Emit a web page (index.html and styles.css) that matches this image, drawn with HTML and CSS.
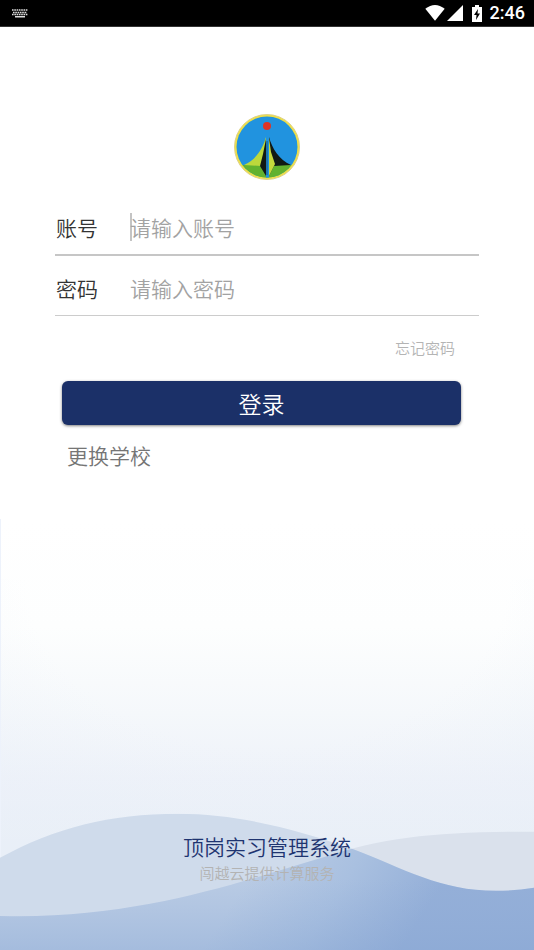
FILE: index.html
```html
<!DOCTYPE html>
<html lang="zh-CN">
<head>
<meta charset="utf-8">
<meta name="viewport" content="width=device-width, initial-scale=1">
<title>顶岗实习管理系统</title>
<link rel="stylesheet" href="styles.css">
</head>
<body>
<header class="status">
  <svg class="keyboard" width="16" height="9" viewBox="0 0 16 9" aria-hidden="true">
    <path d="M0 1h16M1 3.500h14M0 5.500h16" fill="none" stroke="#ddd" stroke-width="1.500" stroke-dasharray="1.600 0.700"/>
    <path d="M3 7h10v1.500H3z" fill="#ddd"/>
  </svg>
  <svg class="wifi" width="20" height="16" viewBox="0 0 20 16" aria-hidden="true"><path d="M0.300 3.800Q10-3.800 19.700 3.800L10 15.800z" fill="#fff"/></svg>
  <svg class="signal" width="16" height="16" viewBox="0 0 16 16" aria-hidden="true"><path d="M16 0v16H0z" fill="#fff"/></svg>
  <svg class="battery" width="10" height="17" viewBox="0 0 10 17" aria-hidden="true">
    <path d="M3 0h4v2h3v15H0V2h3z" fill="#fff"/>
    <path d="M6 4L2 10h2.500L4 15l4-6.500H5.500z" fill="#000"/>
  </svg>
  <span class="clock">2:46</span>
</header>
<main class="page">
  <svg class="logo" width="66" height="66" viewBox="0 0 66 66" role="img" aria-label="校徽">
    <defs><clipPath id="disc"><circle cx="33" cy="33" r="30.500"/></clipPath></defs>
    <circle cx="33" cy="33" r="32.500" fill="#f0e044"/>
    <circle cx="33" cy="33" r="32.500" fill="none" stroke="#ddd28a" stroke-width="1"/>
    <g clip-path="url(#disc)">
      <path d="M0 0h66v66H0z" fill="#2193df"/>
      <path d="M0 51H66V66H0z" fill="#62b22f"/>
      <path d="M32 23C29 34 22 46 10 51L27 52L32 61z" fill="#bcd83c"/>
      <path d="M32 25L29 40L26 52L32 62z" fill="#111915"/>
      <path d="M35 23C38 34 45 46 57 51L40 52L35 62z" fill="#111915"/>
      <path d="M35 24L37 38L41 50L35 62z" fill="#c5d93d"/>
      <path d="M32 23h3v43h-3z" fill="#2193df"/>
      <path d="M32.500 27h1v34h-1z" fill="#185a80"/>
    </g>
    <circle cx="33" cy="12" r="4" fill="#df3425"/>
  </svg>
  <form class="login">
    <div class="field field-active">
      <label for="account">账号</label>
      <input id="account" type="text" placeholder="请输入账号">
    </div>
    <div class="field">
      <label for="password">密码</label>
      <input id="password" type="password" placeholder="请输入密码">
    </div>
    <a class="forgot" href="#forgot">忘记密码</a>
    <button class="submit" type="submit">登录</button>
    <a class="school" href="#school">更换学校</a>
  </form>
  <footer class="footer">
    <svg class="waves" viewBox="0 0 534 430" preserveAspectRatio="none" aria-hidden="true">
      <defs>
        <linearGradient id="sky" x1="0" y1="0" x2="0" y2="1">
          <stop offset="0" stop-color="#fff"/>
          <stop offset=".25" stop-color="#fdfefe"/>
          <stop offset=".45" stop-color="#f5f8fb"/>
          <stop offset=".6" stop-color="#eef2f9"/>
          <stop offset=".75" stop-color="#e9eff7"/>
          <stop offset="1" stop-color="#e9eff7"/>
        </linearGradient>
        <radialGradient id="edge" cx=".5" cy="0" r="1">
          <stop offset=".45" stop-color="#e9eff8" stop-opacity="0"/>
          <stop offset="1" stop-color="#e9eff8" stop-opacity=".6"/>
        </radialGradient>
        <linearGradient id="deep" gradientUnits="userSpaceOnUse" x1="260" y1="340" x2="400" y2="430">
          <stop offset="0" stop-color="#b9cbe4"/>
          <stop offset=".5" stop-color="#a9c0e0"/>
          <stop offset="1" stop-color="#94afd8"/>
        </linearGradient>
        <linearGradient id="floor" x1="0" y1="0" x2="0" y2="1">
          <stop offset="0" stop-color="#8facd8" stop-opacity="0"/>
          <stop offset=".4" stop-color="#8facd8" stop-opacity="0"/>
          <stop offset="1" stop-color="#86a5d3" stop-opacity=".4"/>
        </linearGradient>
        <clipPath id="front"><path d="M0 338C55 308 110 294 178 294C240 294 300 311 352 329C405 349 440 371 496 371Q515 371 534 368V430H0z"/></clipPath>
      </defs>
      <path d="M0 0h534v430H0z" fill="url(#sky)"/>
      <path d="M0 60h534v370H0z" fill="url(#edge)"/>
      <path d="M0 0h1v338H0z" fill="#edf2fb"/>
      <path d="M0 396C140 400 245 360 325 337C385 317 440 312 534 312V430H0z" fill="#dae1ec"/>
      <g clip-path="url(#front)">
        <path d="M0 280h534v150H0z" fill="#cfdbeb"/>
        <path d="M0 396C140 400 245 360 325 337C385 317 440 312 534 312V430H0z" fill="url(#deep)"/>
        <path d="M0 396C140 400 245 360 325 337C385 317 440 312 534 312V430H0z" fill="url(#floor)"/>
      </g>
    </svg>
    <p class="product">顶岗实习管理系统</p>
    <p class="provider">闯越云提供计算服务</p>
  </footer>
</main>
</body>
</html>
```
FILE: styles.css
```css
* {
  box-sizing: border-box;
}

body {
  display: flex;
  flex-direction: column;
  min-height: 100vh;
  margin: 0;
  background: #fff;
  color: #333;
  font-family: "Noto Sans CJK SC", sans-serif;
  font-size: 21px;
  font-weight: 350;
  line-height: 30px;
}

a {
  text-decoration: none;
}

.status {
  display: flex;
  align-items: center;
  height: 27px;
  padding: 0 9px 0 12px;
  background: #000;
  border-bottom: 1px solid #333;
  color: #fff;
  font-family: Roboto, sans-serif;
  font-size: 18px;
  font-weight: 500;
}

.wifi {
  margin-left: auto;
}

.signal {
  margin: 0 9px 0 2px;
}

.clock {
  margin-left: 8px;
}

.page {
  display: flex;
  flex: 1;
  flex-direction: column;
}

.logo {
  align-self: center;
  margin-top: 87px;
}

.login {
  display: flex;
  flex-direction: column;
  margin: 16px 55px 0;
}

.field {
  display: flex;
  align-items: center;
  height: 60px;
  padding-top: 4px;
  border-bottom: 1px solid #ccc;
}

.field-active {
  border-bottom: 2px solid #c6c6c6;
}

.field label {
  width: 75px;
  padding-left: 1px;
}

.field input {
  flex: 1;
  min-width: 0;
  height: 28px;
  padding: 0;
  border: 0;
  outline: 0;
  background: transparent;
  color: #333;
  font: inherit;
}

.field-active input {
  background: linear-gradient(#c4c4c4, #c4c4c4) left / 2px 28px no-repeat;
}

.field input::placeholder {
  color: #a2a2a2;
  opacity: 1;
}

.forgot {
  align-self: flex-end;
  margin: 20px 24px 0 0;
  color: #b4b4b4;
  font-size: 15px;
  line-height: 24px;
}

.submit {
  height: 44px;
  margin: 21px 18px 0 7px;
  padding: 0;
  border: 0;
  border-radius: 6px;
  background: #1b3068;
  box-shadow: 0 1px 3px rgba(0, 0, 0, 0.5);
  color: #fff;
  font: inherit;
  font-size: 23px;
}

.school {
  align-self: flex-start;
  margin: 15px 0 0 12px;
  color: #757575;
}

.footer {
  position: relative;
  display: flex;
  flex: 1;
  flex-direction: column;
  justify-content: flex-end;
  min-height: 430px;
  margin-top: 49px;
  padding-bottom: 65px;
  text-align: center;
}

.footer p {
  margin: 0;
}

.waves {
  position: absolute;
  inset: 0;
  z-index: -1;
  width: 100%;
  height: 100%;
}

.product {
  color: #1e3470;
}

.provider {
  color: #b3b3b3;
  font-size: 15px;
  line-height: 24px;
}
```
